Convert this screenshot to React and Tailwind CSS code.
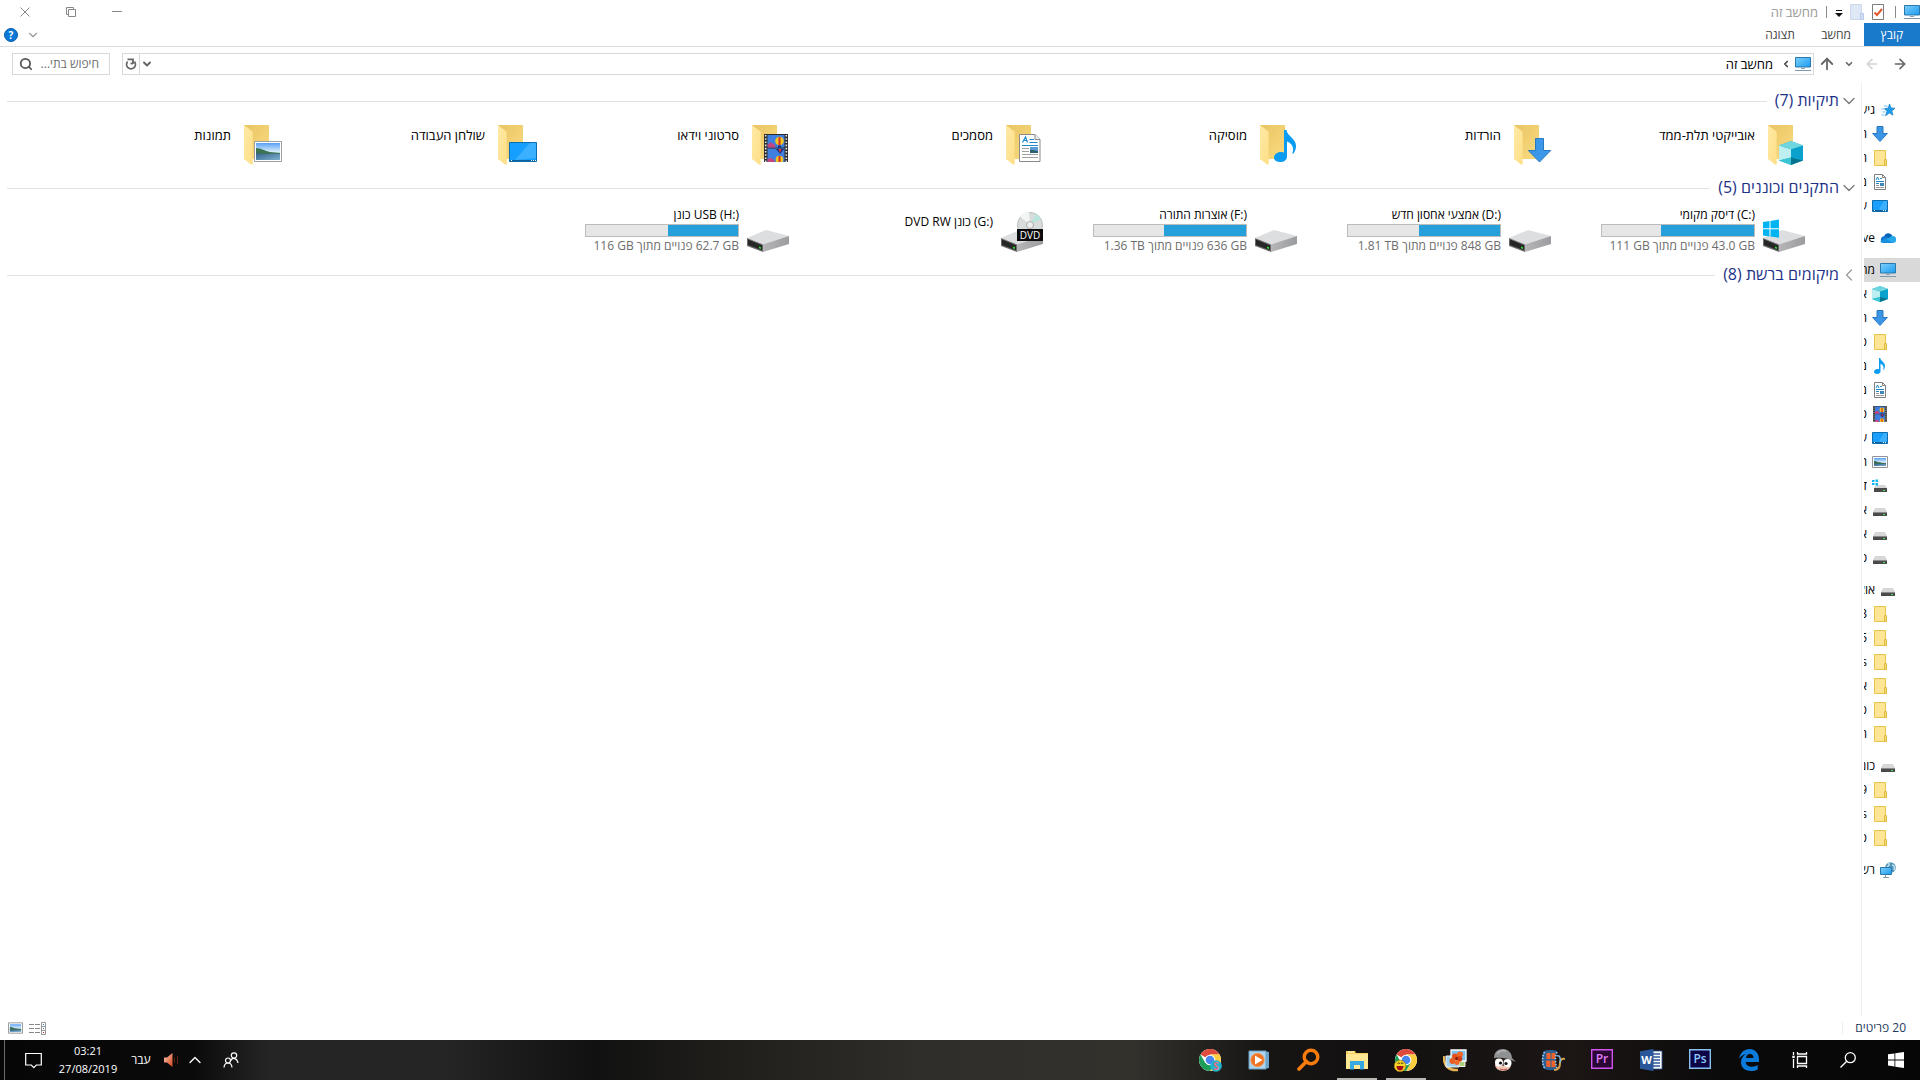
import {
  ArrowLeft,
  ArrowRight,
  ArrowUp,
  ChevronDown,
  ChevronLeft,
  ChevronUp,
  Search,
} from "lucide-react";
import { useState } from "react";

const folders = [
  { name: "אובייקטי תלת-ממד", kind: "cube" },
  { name: "הורדות", kind: "download" },
  { name: "מוסיקה", kind: "music" },
  { name: "מסמכים", kind: "document" },
  { name: "סרטוני וידאו", kind: "video" },
  { name: "שולחן העבודה", kind: "desktop" },
  { name: "תמונות", kind: "picture" },
];

const drives = [
  { letter: "(C:)", name: "דיסק מקומי", used: 61, free: "43.0 GB", total: "111 GB", kind: "system" },
  { letter: "(D:)", name: "אמצעי אחסון חדש", used: 53, free: "848 GB", total: "1.81 TB" },
  { letter: "(F:)", name: "אוצרות התורה", used: 54, free: "636 GB", total: "1.36 TB" },
  { letter: "(G:)", name: "כונן DVD RW", kind: "dvd" },
  { letter: "(H:)", name: "USB כונן", used: 46, free: "62.7 GB", total: "116 GB" },
];

const navGroups = [
  [
    { name: "גישה מהירה", kind: "star", top: true },
    { name: "הורדות", kind: "download" },
    { name: "חדש", kind: "folder" },
    { name: "מסמכים", kind: "document" },
    { name: "שולחן העבודה", kind: "desktop" },
  ],
  [{ name: "OneDrive", kind: "cloud", top: true }],
  [
    { name: "מחשב זה", kind: "pc", top: true, active: true },
    { name: "אובייקטי תלת-ממד", kind: "cube" },
    { name: "הורדות", kind: "download" },
    { name: "סרטים", kind: "folder" },
    { name: "מוסיקה", kind: "music" },
    { name: "מסמכים", kind: "document" },
    { name: "סרטוני וידאו", kind: "video" },
    { name: "שולחן העבודה", kind: "desktop" },
    { name: "תמונות", kind: "picture" },
    { name: "דיסק מקומי", kind: "system" },
    { name: "אמצעי אחסון", kind: "drive" },
    { name: "אוצרות התורה", kind: "drive" },
    { name: "כונן USB", kind: "drive" },
  ],
  [
    { name: "אוצרות התורה", kind: "drive", top: true },
    { name: "3", kind: "folder" },
    { name: "5", kind: "folder" },
    { name: "s", kind: "folder" },
    { name: "אישי", kind: "folder" },
    { name: "סרטים", kind: "folder" },
    { name: "חדש", kind: "folder" },
  ],
  [
    { name: "כונן USB", kind: "drive", top: true },
    { name: "9", kind: "folder" },
    { name: "s", kind: "folder" },
    { name: "סרטים", kind: "folder" },
  ],
  [{ name: "רשת", kind: "network", top: true }],
];

export default function App() {
  return (
    <div
      dir="rtl"
      className="min-h-screen flex flex-col bg-white text-black text-xs font-['Open_Sans','Noto_Sans',sans-serif] select-none"
    >
      <Gradients />
      <TitleBar />
      <RibbonTabs />
      <AddressRow />
      <div className="flex flex-1">
        <Sidebar />
        <Content />
      </div>
      <StatusBar />
      <Taskbar />
    </div>
  );
}

const TitleBar = () => (
  <header className="flex items-center h-[23px]">
    <div className="flex items-center flex-1 gap-2">
      <SmallIcon kind="pc" />
      <span className="w-px h-3 bg-[#8a8a8a]" />
      <div className="flex items-center gap-[7px] ms-0.5">
        <button aria-label="מאפיינים">
          <svg width="14" height="16" viewBox="0 0 14 16">
            <path d="M1.5.5h11v15h-11z" fill="#fff" stroke="#7c7c7c" />
            <path d="M3.5 8.500l2.500 2.500 5-6" fill="none" stroke="#e4572a" strokeWidth="2" />
          </svg>
        </button>
        <button aria-label="תיקיה חדשה">
          <svg width="14" height="16" viewBox="0 0 14 16">
            <path d="M.5.500h11v15H.500z" fill="#dfe8f7" stroke="#cbd8ee" />
            <path d="M10.500 9.500h3v6h-3z" fill="#d2def2" stroke="#b9cae8" />
          </svg>
        </button>
        <button aria-label="התאמה אישית">
          <svg width="8" height="16" viewBox="0 0 8 16">
            <path d="M1 6h6v1H1zM0 9h8l-4 4z" fill="#111" />
          </svg>
        </button>
      </div>
      <span className="w-px h-3 bg-[#8a8a8a]" />
      <h1 className="text-[13px] leading-4 text-[#999]">מחשב זה</h1>
    </div>
    <WindowButton label="מזער">
      <path d="M0 4.500h10" />
    </WindowButton>
    <WindowButton label="שחזר">
      <path d="M2.500 2.500h7v7h-7zM2.500 7.500h-2v-7h7v2" />
    </WindowButton>
    <WindowButton label="סגור">
      <path d="M.5.500l9 9M9.500.500l-9 9" />
    </WindowButton>
    <span className="w-0.5" />
  </header>
);

const WindowButton = ({ label, children }) => (
  <button aria-label={label} className="flex items-center justify-center w-[46px] h-5">
    <svg width="10" height="10" viewBox="0 0 10 10" fill="none" stroke="#888">
      {children}
    </svg>
  </button>
);

const RibbonTabs = () => (
  <nav className="flex items-center h-6 border-b border-[#dadbdc]">
    <button className="w-14 h-full bg-[#1979ca] text-white">קובץ</button>
    <button className="w-14 h-full text-[#444]">מחשב</button>
    <button className="w-14 h-full text-[#444]">תצוגה</button>
    <div className="flex items-center gap-2 ms-auto me-1">
      <button aria-label="הרחב את רצועת הכלים">
        <ChevronDown className="w-3.5 h-3.5 text-[#999]" strokeWidth={2} />
      </button>
      <button
        aria-label="עזרה"
        className="w-3.5 h-3.5 rounded-full bg-[#0a78d6] border border-[#0a5cab] text-white text-[10px] leading-3 font-bold"
      >
        ?
      </button>
    </div>
  </nav>
);

const AddressRow = () => (
  <div className="flex items-center h-[35px] ps-3 pe-3 pb-px text-[#666]">
    <button aria-label="הקודם">
      <ArrowRight className="w-4 h-4" strokeWidth={2.4} />
    </button>
    <button aria-label="הבא" className="ms-3">
      <ArrowLeft className="w-4 h-4 text-[#d4d4d4]" strokeWidth={2.4} />
    </button>
    <button aria-label="מיקומים אחרונים" className="ms-2.5">
      <ChevronDown className="w-2.5 h-2.5" strokeWidth={4} />
    </button>
    <button aria-label="למעלה" className="ms-2">
      <ArrowUp className="w-[18px] h-[18px]" strokeWidth={2.4} />
    </button>
    <div className="flex flex-1 items-center h-[22px] ms-1 border border-[#d9d9d9] ps-0.5">
      <SmallIcon kind="pc" />
      <ChevronLeft className="w-2.5 h-2.5 text-[#444] mx-1" strokeWidth={4} />
      <a href="#pc" className="px-1 text-[13px] leading-4 text-black">
        מחשב זה
      </a>
      <button aria-label="היסטוריה" className="ms-auto px-px">
        <ChevronDown className="w-3 h-3" strokeWidth={4} />
      </button>
      <button
        aria-label="רענן"
        className="flex items-center justify-center w-[17px] h-full border-s border-[#d9d9d9]"
      >
        <svg width="12" height="12" viewBox="0 0 12 12" fill="none" stroke="#666" strokeWidth="1.800">
          <path d="M2.600 3.600A4.400 4.400 0 1 0 9.400 3.600" />
          <path d="M2.500 1.400H8V6" />
          <path d="M8 5.500H5.500" />
        </svg>
      </button>
    </div>
    <label className="flex items-center w-[98px] h-[22px] ms-3 ps-2.5 pe-1.5 border border-[#d9d9d9]">
      <input
        type="text"
        aria-label="חיפוש"
        placeholder="חיפוש בתי..."
        className="flex-1 min-w-0 leading-4 outline-none placeholder:text-[#6d6d6d]"
      />
      <Search className="w-3.5 h-3.5 shrink-0 text-[#555]" strokeWidth={3} />
    </label>
  </div>
);

const Sidebar = () => (
  <aside className="w-[59px] shrink-0 flex flex-col gap-2 pt-4 border-e border-[#f0f0f0] overflow-hidden">
    {navGroups.map((group, i) => (
      <ul key={i} className="me-0.5 overflow-hidden">
        {group.map((item, j) => (
          <li key={j}>
            <a
              href="#nav"
              className={`flex items-center gap-[5px] h-6 whitespace-nowrap ${
                item.top ? "ps-6" : "ps-8"
              } ${item.active ? "bg-[#d9d9d9]" : ""}`}
            >
              <SmallIcon kind={item.kind} />
              <span className="flex-1 min-w-0 overflow-hidden">{item.name}</span>
            </a>
          </li>
        ))}
      </ul>
    ))}
  </aside>
);

const Content = () => (
  <main className="flex-1 min-w-0 pt-[7px]">
    <Group title="תיקיות (7)" defaultOpen>
      {folders.map((f) => (
        <Tile key={f.name} icon={<FolderIcon kind={f.kind} />}>
          <p className="pt-[7px] text-[13px] leading-4">{f.name}</p>
        </Tile>
      ))}
    </Group>
    <Group title="התקנים וכוננים (5)" defaultOpen>
      {drives.map((d) => (
        <Tile key={d.letter} icon={<DriveIcon kind={d.kind} />}>
          <p className={`leading-4 ${d.free ? "" : "pt-[7px]"}`}>
            <bdi dir="ltr">{d.letter}</bdi> {d.name}
          </p>
          {d.free && (
            <>
              <div
                role="progressbar"
                aria-valuenow={d.used}
                className="h-[13px] mt-px border border-[#bcbcbc] bg-[#e6e6e6]"
              >
                <div className="h-full bg-[#26a0da]" style={{ width: `${d.used}%` }} />
              </div>
              <p className="leading-4 mt-px text-[#6d6d6d]">
                <bdi dir="ltr">{d.free}</bdi> פנויים מתוך <bdi dir="ltr">{d.total}</bdi>
              </p>
            </>
          )}
        </Tile>
      ))}
    </Group>
    <Group title="מיקומים ברשת (8)" />
  </main>
);

const Group = ({ title, defaultOpen = false, children }) => {
  const [open, setOpen] = useState(defaultOpen);
  return (
    <section>
      <button
        onClick={() => setOpen(!open)}
        className="flex items-center w-full h-6 ps-0.5 pe-[7px] text-base text-[#1e3287]"
      >
        {open ? (
          <ChevronDown className="w-5 h-5 text-[#777]" strokeWidth={1.5} />
        ) : (
          <ChevronLeft className="w-5 h-5 text-[#999]" strokeWidth={1.5} />
        )}
        <span className="pb-0.5 leading-[22px] whitespace-nowrap">{title}</span>
        <span className="flex-1 h-px ms-2 bg-[#e2e2e2]" />
      </button>
      {open && (
        <div className="grid grid-cols-[repeat(auto-fill,254px)] ps-[43px]">{children}</div>
      )}
    </section>
  );
};

const Tile = ({ icon, children }) => (
  <button className="flex items-start gap-[5px] h-[63px] ps-2.5 pt-[7px] text-start">
    {icon}
    <div className="w-[154px] whitespace-nowrap">{children}</div>
  </button>
);

const StatusBar = () => (
  <footer className="flex items-center h-6 px-2 text-[#1e395b]">
    <span className="ps-1.5 pe-3 border-e border-[#eee] leading-3">20 פריטים</span>
    <div className="flex items-center gap-1.5 ms-auto">
      <button aria-label="פרטים">
        <svg width="17" height="13" viewBox="0 0 17 13">
          <path d="M0 2.500h5M6 2.500h5M0 6.500h5M6 6.500h5M0 10.500h5M6 10.500h5" stroke="#888" />
          <path d="M12.500.500h4v12h-4zM12.500 4.500h4M12.500 8.500h4" fill="none" stroke="#999" />
          <path d="M14 2h1v1h-1zM14 6h1v1h-1z" fill="#3b78c4" />
          <path d="M14 10h1v1h-1z" fill="#d22" />
        </svg>
      </button>
      <button aria-label="סמלים גדולים">
        <svg width="15" height="12" viewBox="0 0 16 12">
          <PictureArt />
        </svg>
      </button>
    </div>
  </footer>
);

const taskbarApps = [
  { name: "Edge", icon: "edge" },
  { name: "Photoshop", icon: "ps" },
  { name: "Word", icon: "word" },
  { name: "Premiere", icon: "pr" },
  { name: "Movie Maker", icon: "reel" },
  { name: "Face", icon: "face" },
  { name: "Photo Gallery", icon: "gallery" },
  { name: "Chrome", icon: "chromeSmile", open: true },
  { name: "Explorer", icon: "explorer", open: true },
  { name: "Everything", icon: "finder" },
  { name: "Media Player", icon: "player" },
  { name: "Chrome S", icon: "chromeS" },
];

const Taskbar = () => (
  <div className="flex h-10 text-white bg-[linear-gradient(to_right,#060606_0%,#0a0a0a_10%,#252525_14%,#252525_23%,#111_31%,#1e1d1a_37%,#2f2e2a_48%,#32312c_59%,#161514_66%,#121010_72%,#1c1615_82%,#0a0a0a_90%,#060606_100%)]">
    <TaskButton label="התחל">
      <svg width="16" height="16" viewBox="0 0 16 16" fill="#fff">
        <path d="M0 2.300l6.500-.9v6.100H0zM7.300 1.200L16 0v7.500H7.300zM0 8.400h6.500v6.100L0 13.600zM7.300 8.400H16V16l-8.700-1.200z" />
      </svg>
    </TaskButton>
    <TaskButton label="חיפוש">
      <svg width="16" height="16" viewBox="0 0 16 16" fill="none" stroke="#fff" strokeWidth="1.300">
        <circle cx="10.300" cy="5.700" r="5" />
        <path d="M6.700 9.300L.5 15.500" />
      </svg>
    </TaskButton>
    <TaskButton label="תצוגת משימות">
      <svg width="16" height="16" viewBox="0 0 16 16" fill="none" stroke="#fff" strokeWidth="1.300">
        <path d="M5.500 4.500h9v7h-9zM5.500 0v2h9V0M5.500 16v-2h9v2M1.500 0v3M1.500 7v9" />
        <path d="M.3 3.700h2.400v2.400H.3z" fill="#fff" stroke="none" />
      </svg>
    </TaskButton>
    <div className="flex ms-[3px]">
      {taskbarApps.map((app) => (
        <button
          key={app.name}
          aria-label={app.name}
          className="relative flex items-center justify-center w-[49px] h-full"
        >
          <svg width="24" height="24" viewBox="0 0 24 24">
            {appArt[app.icon]}
          </svg>
          {app.open && <span className="absolute bottom-0 w-10 h-0.5 bg-[#b9b7b4]" />}
        </button>
      ))}
    </div>
    <div dir="ltr" className="flex items-center mr-auto h-full">
      <span className="ml-1 w-px h-full bg-[#6a6a6a]" />
      <button aria-label="הודעות" className="flex justify-center w-[52px] pl-1">
        <svg width="17" height="17" viewBox="0 0 17 17" fill="none" stroke="#fff" strokeWidth="1.200">
          <path d="M.7 1.500h15.600v11.500h-5l-2.500 2.600L6.300 13H.7z" />
        </svg>
      </button>
      <button className="w-[62px] text-[11px] leading-[18px] text-center">
        <div>03:21</div>
        <div>27/08/2019</div>
      </button>
      <button className="w-11 text-center">עבר</button>
      <button aria-label="עוצמת קול" className="flex justify-center w-4">
        <svg width="15" height="14" viewBox="0 0 15 14">
          <path d="M0 4.500h3L8.500 0v14L3 9.500H0z" fill="url(#sound)" />
          <path d="M10.500 4.500v5M13.500 3v8" stroke="#5c2213" />
        </svg>
      </button>
      <button aria-label="סמלים מוסתרים" className="flex justify-center w-8">
        <ChevronUp className="w-5 h-5" strokeWidth={1.6} />
      </button>
      <button aria-label="אנשים" className="flex justify-center w-10">
        <svg width="16" height="16" viewBox="0 0 16 16" fill="none" stroke="#fff" strokeWidth="1.200">
          <circle cx="11" cy="3.500" r="2.700" />
          <path d="M8 8.500c1-3 6-3 7 2.500" />
          <circle cx="5" cy="8.500" r="2.500" />
          <path d="M1 15.500c.5-6 7.500-6 8 0" />
        </svg>
      </button>
    </div>
  </div>
);

const TaskButton = ({ label, children }) => (
  <button aria-label={label} className="flex items-center justify-center w-12 h-full">
    {children}
  </button>
);

/* Shared gradients for the icons */
const Gradients = () => (
  <svg className="absolute w-0 h-0" aria-hidden="true">
    <defs>
      <linearGradient id="flap" x1="0" y1="0" x2="1" y2="1">
        <stop offset="0" stopColor="#ffe9a6" />
        <stop offset="1" stopColor="#fddf86" />
      </linearGradient>
      <linearGradient id="back" x1="0" y1="0" x2="1" y2="1">
        <stop offset="0" stopColor="#e8c464" />
        <stop offset="1" stopColor="#fbdc81" />
      </linearGradient>
      <linearGradient id="screen" x1="0" y1="0" x2="1" y2="1">
        <stop offset="0" stopColor="#7fd0fb" />
        <stop offset="1" stopColor="#1a9bf0" />
      </linearGradient>
      <linearGradient id="sky" x1="0" y1="0" x2="0" y2="1">
        <stop offset="0" stopColor="#5a9ff6" />
        <stop offset="0.500" stopColor="#d5ecfa" />
        <stop offset="1" stopColor="#7ba6c4" />
      </linearGradient>
      <linearGradient id="water" x1="0" y1="0" x2="1" y2="1">
        <stop offset="0" stopColor="#33628a" />
        <stop offset="1" stopColor="#7fb0cf" />
      </linearGradient>
      <linearGradient id="metal" x1="0" y1="0" x2="1" y2="0">
        <stop offset="0" stopColor="#b6b6b8" />
        <stop offset="1" stopColor="#9b9c9f" />
      </linearGradient>
      <linearGradient id="sound" x1="0" y1="0" x2="1" y2="1">
        <stop offset="0" stopColor="#f9c8b4" />
        <stop offset="1" stopColor="#d8451c" />
      </linearGradient>
    </defs>
  </svg>
);

const PictureArt = () => (
  <>
    <path d="M.5.500h15v11H.500z" fill="#fff" stroke="#8f9499" />
    <path d="M2 2h12v8H2z" fill="url(#sky)" />
    <path d="M2 5c3 0 5 2 12 2v1H2z" fill="#3f6f5a" />
    <path d="M2 8h12v2H2z" fill="url(#water)" />
  </>
);

const CubeArt = () => (
  <>
    <path d="M8 0l8 3v10l-8 3-8-3V3z" fill="#19b4cf" />
    <path d="M0 3l8 2.500V11l-8 2z" fill="#bdeef0" />
    <path d="M8 5.500L16 3v10l-8-2z" fill="#0aa2cc" />
    <path d="M8 0l8 3-8 2.500L0 3z" fill="#6fd6df" />
    <path d="M0 13l8-2v5z" fill="#3cc5d3" />
    <path d="M8 11l8 2-8 3z" fill="#06748f" />
  </>
);

const VideoArt = () => (
  <>
    <path d="M0 0h24v28H0z" fill="#2b2b2b" />
    <path d="M3.500 1h17v12.500h-17zM3.500 14.500h17V28h-17z" fill="#3f7fe0" />
    <path d="M3.500 10.500l3-2 4 2 1 3h-8zM3.500 25l3-1 4 2v2h-7z" fill="#c4447d" />
    <circle cx="15.500" cy="7" r="4.300" fill="#f3c622" />
    <path d="M14.500 3h2v8h-2z" fill="#d22f27" />
    <path d="M14 11.500h3v2h-3zM12 15h8l-4 5z" fill="#1d2f7a" />
    <path d="M14.500 15h3l-1.500 4z" fill="#e8392c" />
    <circle cx="15.500" cy="25.500" r="3.800" fill="#f3c622" />
    <path d="M14.500 22h2v6h-2z" fill="#d22f27" />
    <path d="M0 28h24v3H0z" fill="#fff" />
    <path d="M1.700 1v27M22.300 1v27" stroke="#e8e8e8" strokeWidth="1.600" strokeDasharray="1.600 1.600" />
  </>
);

const MusicArt = () => (
  <path
    d="M10 0h2.500c.5 6 9 8 9.500 15.500.2 3-1 6-2.500 8-.5.500-1.200.2-1-.4 1.500-5 .5-9-5.500-11.600V26.500c0 3.500-3 5.500-6.500 5.500S0 30.500 0 27.500 3 22 7 22c1.200 0 2.200.3 3 .6z"
    fill="#0a9bf2"
  />
);

const smallArt = {
  pc: (
    <>
      <path d="M.5 1.500h15v9.500H.500z" fill="url(#screen)" stroke="#2b78ab" />
      <path d="M6 12h4v1H6z" fill="#8fa5b5" />
      <path d="M0 14.500h16" stroke="#7d98ab" />
    </>
  ),
  star: (
    <>
      <path
        d="M9.500 2l1.500 4 4 .2-3.200 2.700 1.200 4.300-3.500-2.200-4 2.700 1.500-4.200L4.500 6.500l3.700-.3z"
        fill="#1e9df0"
        stroke="#1578bd"
        strokeWidth=".7"
      />
      <path d="M4 4h3.500M1.500 7h3M2.500 10h3M1.500 13h3" stroke="#6cc0f5" />
    </>
  ),
  download: (
    <path d="M5 .5h6v7h4.300L8 15.500.7 7.500H5z" fill="#3a95e4" stroke="#2a78bf" />
  ),
  folder: (
    <>
      <path d="M2.500.500h11v15h-11z" fill="#ffe596" stroke="#e8c34c" />
      <path d="M12.500 9.500h2v6h-2z" fill="#fbdc78" stroke="#e0b93f" />
    </>
  ),
  document: (
    <>
      <path d="M2.500.500h8l3 3v12h-11z" fill="#fff" stroke="#7f7f7f" />
      <path d="M10.500.500v3h3" fill="none" stroke="#7f7f7f" />
      <path d="M4 6l1.500-3L7 6M8 4.500h2M4 7.500h8M4 9.500h3" fill="none" stroke="#1c86cc" />
      <path d="M8 9h4v3H8z" fill="#3d86b9" />
      <path d="M4 11.500h3M4 13.500h8" stroke="#999" />
    </>
  ),
  desktop: (
    <>
      <path d="M.5 2.500h15v11H.500z" fill="#1aa0fb" stroke="#0c6db0" />
      <path d="M15 3v8L6 13 12 3z" fill="#3db0ff" />
      <path d="M1 12.500h14" stroke="#0d5e9a" />
      <path d="M2 12h1v1H2zM11 12h1v1h-1zM13 12h1v1h-1z" fill="#fff" />
    </>
  ),
  cloud: (
    <>
      <path d="M4 6.500a4.500 4.500 0 0 1 8.500-.5L9 10z" fill="#0364b8" />
      <path d="M3.500 13a3.400 3.400 0 0 1 .5-6.700c1.500-.2 3 .4 6 2.700L12 13z" fill="#1177d3" />
      <path d="M12.500 6a3.500 3.500 0 0 1 .5 7H3.500c-1.500 0-2.500-.8-3-2l9-3.500c.8-.9 1.800-1.500 3-1.500z" fill="#28a8ea" />
      <path d="M.5 11l5-2.200L13 13H3.500c-1.500 0-2.500-.8-3-2z" fill="#1490df" />
    </>
  ),
  cube: <CubeArt />,
  music: (
    <g transform="translate(2 0) scale(.5)">
      <MusicArt />
    </g>
  ),
  video: (
    <g transform="translate(1 0) scale(.58 .57)">
      <VideoArt />
    </g>
  ),
  picture: (
    <g transform="translate(0 2)">
      <PictureArt />
    </g>
  ),
  drive: (
    <>
      <path d="M3 6h10l2 4H1z" fill="#d5d6d8" />
      <path d="M1 10h14v4H1z" fill="#4a4a4c" />
      <path d="M1 10h14v1H1z" fill="#8b8b8e" />
      <path d="M11 12h2v1h-2z" fill="#4fe35b" />
    </>
  ),
  system: (
    <>
      <path d="M4 7h9l2 3H2z" fill="#d5d6d8" />
      <path d="M2 10h13v4H2z" fill="#4a4a4c" />
      <path d="M11 12h2v1h-2z" fill="#4fe35b" />
      <path d="M0 2h2.500v2H0zM3.500 1.500H6V4H3.500zM0 5h2.500v2H0zM3.500 5H6v2.500H3.500z" fill="#10b5f0" />
    </>
  ),
  network: (
    <>
      <circle cx="10.500" cy="5.500" r="5.300" fill="#5596bd" />
      <path d="M8 1c2 1 1 3-1 4M12 3c2 0 3 2 2 5" stroke="#bfe0ee" strokeWidth="1.500" fill="none" />
      <path d="M.5 5.500h11v7H.500z" fill="url(#screen)" stroke="#2b78ab" />
      <path d="M5.500 13v2M3 15.500h6" stroke="#8299a8" />
    </>
  ),
};

const SmallIcon = ({ kind }) => (
  <svg width="16" height="16" viewBox="0 0 16 16" className="shrink-0">
    {smallArt[kind]}
  </svg>
);

const folderOverlay = {
  cube: (
    <g transform="translate(19 21) scale(1.500)">
      <CubeArt />
    </g>
  ),
  download: <path d="M29.500 18.500h8v12h7.200L33.500 42 22.300 30.500h7.200z" fill="#3b98e8" stroke="#2a78bf" />,
  music: (
    <g transform="translate(22 10)">
      <MusicArt />
    </g>
  ),
  document: (
    <g transform="translate(21 14)">
      <path d="M.5.500h15.500l5 5V27.500H.500z" fill="#fff" stroke="#8a8a8a" />
      <path d="M16 .500v5h5" fill="#eee" stroke="#8a8a8a" />
      <path d="M3.500 8.500L6.500 3l2 5.500M4.500 6.500h4M10.500 5.500H15M10.500 8.500h8" fill="none" stroke="#1f88cf" strokeWidth="1.200" />
      <path d="M3 11.500h16" stroke="#1f88cf" />
      <path d="M3 14.500h7M3 17.500h7M3 20.500h16M3 23.500h16" stroke="#a0a0a0" />
      <path d="M11 13h8v6h-8z" fill="#5b9bd5" />
      <path d="M11 16c3-1 5 1 8 1v2h-8z" fill="#2e5f6d" />
    </g>
  ),
  video: (
    <g transform="translate(20 14)">
      <VideoArt />
    </g>
  ),
  desktop: (
    <g transform="translate(19 22)">
      <path d="M.5.500h27v19H.500z" fill="#15a0ff" stroke="#0c6db0" />
      <path d="M27 1v15L6 18 21 1z" fill="#3bb0ff" />
      <path d="M1 18.500h26" stroke="#0d5e9a" />
      <path d="M2 18h1v1H2zM22 18h1v1h-1zM24 18h1v1h-1zM26 18h1v1h-1z" fill="#fff" />
    </g>
  ),
  picture: (
    <g transform="translate(18 21)">
      <path d="M.5.500h27v20H.500z" fill="#fff" stroke="#9a9fa3" />
      <path d="M2 2h24v17H2z" fill="url(#sky)" />
      <path d="M2 7c5 0 9 3 14 4l10 1v2H2z" fill="#3d7352" />
      <path d="M2 12c8 2 16 0 24 1v6H2z" fill="url(#water)" />
    </g>
  ),
};

const FolderIcon = ({ kind }) => (
  <svg width="48" height="48" viewBox="0 0 48 48" className="shrink-0">
    <path d="M8 5h25v34H8z" fill="url(#back)" />
    <path d="M8 5l8.700 6.700V44.500H15L8 39z" fill="url(#flap)" />
    {folderOverlay[kind]}
  </svg>
);

const DriveIcon = ({ kind }) => (
  <svg width="48" height="48" viewBox="0 0 48 48" className="shrink-0">
    <path d="M3 31l19-8 23 6-26 9z" fill="#dddee0" />
    <path d="M19 37.500L45 29v8l-26 8z" fill="url(#metal)" />
    <path d="M3 31l16 6.500V45L3 39z" fill="#6b6b6d" />
    <path d="M4 32.500l14 5.700v5L4 38z" fill="#262626" />
    <path d="M15 39.500l2 .7v1.800l-2-.7z" fill="#2fe02f" />
    {kind === "system" && (
      <path
        d="M3 15l6.500-1v7.200H3zM10.500 13.900L19 12.600v8.600h-8.500zM3 22.200h6.500v7.200L3 28.500zM10.500 22.200H19v8.600l-8.500-1.300z"
        fill="#00b4f1"
      />
    )}
    {kind === "dvd" && (
      <>
        <circle cx="32" cy="18" r="12.500" fill="#d9dcdc" stroke="#b9bcbc" />
        <path d="M32 18L22 9.500A13 13 0 0 1 31 5z" fill="#f3f4f4" />
        <path d="M32 18l6-11a12 12 0 0 1 5 5z" fill="#b9e5df" />
        <circle cx="32" cy="18" r="3.500" fill="#eee" stroke="#aaa" />
        <path d="M19 22h26v12H19z" fill="#0c0c0c" />
        <text x="32" y="31.500" textAnchor="middle" fontSize="10" fill="#fff" direction="ltr">
          DVD
        </text>
      </>
    )}
  </svg>
);

const ChromeArt = () => (
  <>
    <circle cx="12" cy="12" r="11" fill="#fff" />
    <path d="M12 12L2.500 6.500A11 11 0 0 1 21.500 6.500H12z" fill="#de4b3c" />
    <path d="M12 6.500h9.500A11 11 0 0 1 12 23l4.800-8.200z" fill="#fccd3f" />
    <path d="M2.500 6.500A11 11 0 0 0 12 23l4.800-8.200L7.200 14.800z" fill="#1c9e58" />
    <circle cx="12" cy="12" r="5.300" fill="#fff" />
    <circle cx="12" cy="12" r="4.300" fill="#4a86f0" />
  </>
);

const appArt = {
  edge: (
    <path
      d="M2 11C3 4.500 7.500 1 12.500 1 18.500 1 22 5.500 22 11.500V14H8.700c.3 3.300 3 4.700 6 4.700 2.300 0 4.300-.6 6-1.700v4.500c-1.900 1-4.200 1.500-6.700 1.500-6.500 0-10-4-10-8.800C4 10.500 6 7.800 9 6.300 5.500 6.700 3.200 8.700 2 11zm7-1h7.500c0-2.500-1.300-4-3.700-4S9.400 7.800 9 10z"
      fill="#0a7bdb"
      fillRule="evenodd"
    />
  ),
  ps: (
    <>
      <path d="M1.700 1.700h20.600v18.600H1.700z" fill="#0c0446" stroke="#89c1f2" strokeWidth="1.400" />
      <text x="12" y="15" textAnchor="middle" fontSize="12" fontWeight="600" fill="#8ecbff" direction="ltr">
        Ps
      </text>
    </>
  ),
  pr: (
    <>
      <path d="M1.700 1.700h20.600v18.600H1.700z" fill="#2a0634" stroke="#d155ec" strokeWidth="1.400" />
      <text x="12" y="15" textAnchor="middle" fontSize="12" fontWeight="600" fill="#e07cf8" direction="ltr">
        Pr
      </text>
    </>
  ),
  word: (
    <>
      <path d="M13 3h10v18H13z" fill="#fff" stroke="#2b5797" strokeWidth=".8" />
      <path d="M14 6h7M14 9h7M14 12h7M14 15h7M14 18h7" stroke="#2b5797" strokeWidth="1.300" />
      <path d="M1 3.200L14.500 1v22L1 20.800z" fill="#2a569a" />
      <text x="7.500" y="16" textAnchor="middle" fontSize="11" fontWeight="700" fill="#fff" direction="ltr">
        W
      </text>
    </>
  ),
  reel: (
    <>
      <path d="M3 3c4-1.500 9-1.500 13 0-2 6-2 12 0 18-4 1.500-9 1.500-13 0C0 16 0 8 3 3z" fill="#2d5f92" />
      <path d="M5.500 5h4v6h-4zM10.500 5h4l-.5 6h-3.500zM5 12.500h4.500v6.500H5.500zM10.500 12.500H14l.5 6.500h-4z" fill="#f0622a" />
      <path d="M3.500 4C1 9 1 15 3.500 20M16 4c-2 5-2 11 0 16" stroke="#a5cdec" fill="none" strokeWidth="1.500" strokeDasharray="1.500 1.500" />
      <path d="M24 11c-3-1-5 1-5 4s-1 7-6 7" fill="none" stroke="#dba04a" strokeWidth="2" />
      <path d="M16 8c3-1 4 3 3 7" fill="none" stroke="#7db4e0" strokeWidth="1.500" />
    </>
  ),
  face: (
    <>
      <ellipse cx="11" cy="17" rx="8" ry="6" fill="#f0c4b4" />
      <path d="M3 10c4-1 12-1 18 2l-1 5c-5 1-12 1-17-1z" fill="#2a211b" />
      <path d="M2 10C2 4 6 1 11 1s9 4 9 9l4 4c-7-4-15-5-22-4z" fill="#8f9092" />
      <path d="M5 6c2-3 6-4 9-3" stroke="#b5b6b8" strokeWidth="1.500" fill="none" />
      <circle cx="7" cy="14.500" r="4" fill="#fff" />
      <circle cx="15.500" cy="15" r="4" fill="#fff" />
      <circle cx="8.500" cy="15" r="1.600" fill="#111" />
      <circle cx="14" cy="15.500" r="1.600" fill="#111" />
      <path d="M8 21c2 1 5 1 7 0" stroke="#b04b3c" fill="none" />
    </>
  ),
  gallery: (
    <>
      <path d="M1 8c-1 9 5 15 14 14" fill="none" stroke="#e8b552" strokeWidth="2.500" />
      <path d="M9 10h13v8.500H9z" fill="#a9cf7c" stroke="#f1f1f1" />
      <path d="M3 8h13v11H3z" fill="#9cd0ee" stroke="#f1f1f1" />
      <path d="M8 2h15v11H8z" fill="#7bc3ee" stroke="#fff" strokeWidth="1.300" />
      <circle cx="12" cy="8.500" r="3" fill="#e7501e" />
      <circle cx="17" cy="6.500" r="3" fill="#f0692b" />
      <circle cx="16.500" cy="11" r="2.800" fill="#d93f17" />
      <circle cx="9.500" cy="13" r="3" fill="#e85d24" />
      <circle cx="14" cy="14.500" r="2.500" fill="#f0692b" />
      <circle cx="13.500" cy="10.500" r="1.500" fill="#7c1f0c" />
    </>
  ),
  chromeSmile: (
    <>
      <ChromeArt />
      <circle cx="6" cy="18" r="5.800" fill="#f8d32a" stroke="#9b7510" strokeWidth=".6" />
      <path d="M2.500 18h7c0 6-7 6-7 0z" fill="#a3101a" />
      <path d="M3.500 16l1.200-1.500L6 16M7 16l1-1.500L9.200 16" stroke="#3a2a05" strokeWidth=".8" fill="none" />
    </>
  ),
  explorer: (
    <>
      <path d="M1 3h9l1 2h12v16H1z" fill="#f5cf5b" />
      <path d="M1 6h22v15H1z" fill="#ffe793" />
      <path d="M3 3.500h6v1.200H3z" fill="#fff4c8" />
      <path d="M5 13h14v8.500h-4V17H9v4.500H5z" fill="#35a9e0" />
    </>
  ),
  finder: (
    <>
      <circle cx="15" cy="9" r="6.800" fill="none" stroke="#f97c0c" strokeWidth="3.400" />
      <path d="M10.500 13.500L3 21" stroke="#f97c0c" strokeWidth="3.800" strokeLinecap="round" />
    </>
  ),
  player: (
    <>
      <path d="M17 3l5 1v16l-5 1z" fill="#6ba4cc" />
      <path d="M2 3h17v18H2z" fill="#a9d3ee" stroke="#6ba1c6" />
      <circle cx="10.500" cy="12" r="6.800" fill="#ee7322" stroke="#f7a566" strokeWidth=".8" />
      <path d="M8 7.500l7.500 4.500L8 16.500z" fill="#fff" />
    </>
  ),
  chromeS: (
    <>
      <ChromeArt />
      <circle cx="18" cy="18" r="5.800" fill="#1fb5cf" />
      <text x="18" y="21.500" textAnchor="middle" fontSize="10" fontWeight="700" fill="#ee6a86" direction="ltr">
        S
      </text>
    </>
  ),
};
